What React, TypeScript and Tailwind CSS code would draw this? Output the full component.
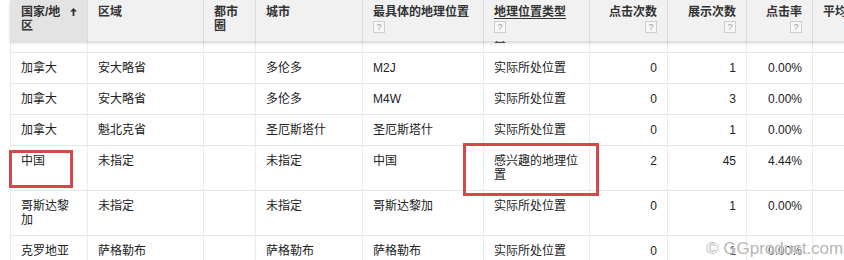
import React from "react";

const cols = [
  { label: "国家/地区", help: false, right: false, sorted: true },
  { label: "区域", help: false, right: false },
  { label: "都市圈", help: false, right: false },
  { label: "城市", help: false, right: false },
  { label: "最具体的地理位置", help: true, right: false },
  { label: "地理位置类型", help: true, right: false, hover: true },
  { label: "点击次数", help: true, right: true },
  { label: "展示次数", help: true, right: true },
  { label: "点击率", help: true, right: true },
  { label: "平均", help: false, right: false },
];

const rows = [
  ["加拿大", "安大略省", "", "多伦多", "M2J", "实际所处位置", "0", "1", "0.00%"],
  ["加拿大", "安大略省", "", "多伦多", "M4W", "实际所处位置", "0", "3", "0.00%"],
  ["加拿大", "魁北克省", "", "圣厄斯塔什", "圣厄斯塔什", "实际所处位置", "0", "1", "0.00%"],
  ["中国", "未指定", "", "未指定", "中国", "感兴趣的地理位置", "2", "45", "4.44%"],
  ["哥斯达黎加", "未指定", "", "未指定", "哥斯达黎加", "实际所处位置", "0", "1", "0.00%"],
  ["克罗地亚", "萨格勒布", "", "萨格勒布", "萨格勒布", "实际所处位置", "0", "1", "0.00%"],
];

const grid =
  "grid grid-cols-[77px_116px_52px_107px_121px_106px_78px_79px_66px_100px]";

function Help() {
  return (
    <span className="inline-flex h-[12px] w-[12px] items-center justify-center border border-[#cfcfcf] bg-[#f7f7f7] text-[9px] leading-none font-normal text-[#9a9a9a]">
      ?
    </span>
  );
}

function SortArrow() {
  return (
    <svg width="7" height="8" viewBox="0 0 7 8" className="mt-[3px] shrink-0">
      <path d="M3.5 0 L7 3.6 L4.4 3.6 L4.4 8 L2.6 8 L2.6 3.6 L0 3.6 Z" fill="#333" />
    </svg>
  );
}

export default function App() {
  return (
    <div className="relative h-[260px] w-[844px] overflow-hidden bg-white font-['Liberation_Sans','Noto_Sans_CJK_SC',sans-serif] text-[12px] leading-[14px] text-[#222]">
      <div className="ml-[10px] w-[902px]">
        {/* header */}
        <div
          className={`${grid} relative z-10 h-[41px] bg-[#f1f1f1] shadow-[0_2px_3px_rgba(0,0,0,0.16)]`}
        >
          {cols.map((c, i) => (
            <div
              key={i}
              className={`flex flex-col gap-[2px] pt-[5px] font-bold text-[#333] ${
                i === 0 ? "bg-[#e3e3e3] pl-[11px]" : "border-l border-[#dcdcdc]"
              } ${c.right ? "items-end pr-[10px]" : "items-start pl-[10px] pr-[10px]"}`}
            >
              {c.sorted ? (
                <div className="flex w-full items-start justify-between">
                  <span className="w-[44px]">{c.label}</span>
                  <SortArrow />
                </div>
              ) : (
                <span className={c.hover ? "underline underline-offset-2" : ""}>
                  {c.label}
                </span>
              )}
              {c.help && <Help />}
            </div>
          ))}
        </div>

        {/* row scrolled under the header */}
        <div className={`${grid} h-[12px] overflow-hidden border-b border-[#e6e6e6]`}>
          {cols.map((_, i) => (
            <div key={i} className="border-l border-[#ececec] pl-[10px]">
              {i === 5 && <div className="-mt-[10px] w-[85px]">置</div>}
            </div>
          ))}
        </div>

        {/* body */}
        {rows.map((r, ri) => (
          <div key={ri} className={`${grid} border-b border-[#e6e6e6]`}>
            {cols.map((c, i) => (
              <div
                key={i}
                className={`border-l border-[#ececec] py-[8px] ${
                  c.right ? "pr-[10px] text-right" : "pl-[10px] pr-[8px]"
                }`}
              >
                {r[i] ?? ""}
              </div>
            ))}
          </div>
        ))}
      </div>

      {/* annotations */}
      <div className="absolute left-[9px] top-[150px] h-[38px] w-[64px] border-[3px] border-[#d64848]" />
      <div className="absolute left-[463px] top-[143px] h-[53px] w-[136px] border-[3px] border-[#d64848]" />

      <div className="absolute left-[706px] top-[239px] text-[17px] leading-[20px] text-[#a8a8a8]/85 [text-shadow:0_0_2px_#fff,0_0_2px_#fff]">
        © GGproduct.com
      </div>
    </div>
  );
}
